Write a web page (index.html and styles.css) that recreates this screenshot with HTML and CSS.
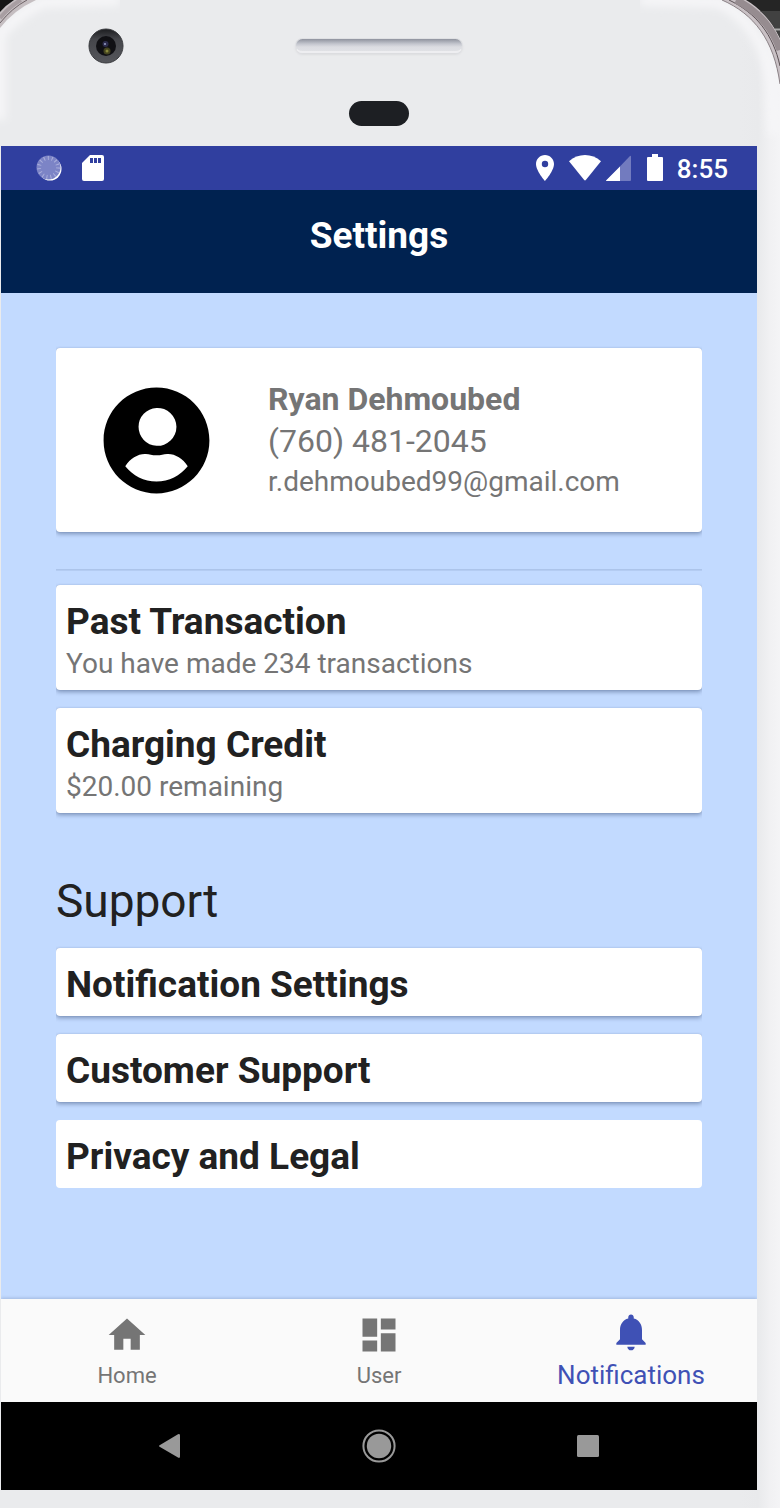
FILE: index.html
```html
<!DOCTYPE html>
<html lang="en">
<head>
<meta charset="utf-8">
<meta name="viewport" content="width=device-width, initial-scale=1">
<title>Settings</title>
<link rel="stylesheet" href="styles.css">
</head>
<body>
<div class="device">
  <svg class="corner corner-left" width="120" height="140" viewBox="0 0 120 140" aria-hidden="true">
    <defs><filter id="soft" x="-50%" y="-50%" width="200%" height="200%"><feGaussianBlur stdDeviation="4"/></filter></defs>
    <path d="M0 120V34Q20 12 44 2L120 0" fill="none" stroke="#f6f6f8" stroke-width="11" filter="url(#soft)"/>
    <path d="M0 28Q14 10 36 0H0Z" fill="#c5bec1"/>
    <path d="M0 23Q12 8 27 0" fill="none" stroke="#6d6266" stroke-width="1"/>
    <path d="M0 18Q10 6 21 0" fill="none" stroke="#a89ea2" stroke-width="4"/>
    <path d="M0 12Q6 5 14 0H0Z" fill="#161616"/>
  </svg>
  <svg class="corner corner-right" width="140" height="140" viewBox="0 0 140 140" aria-hidden="true">
    <path d="M0 0L78 2C108 16 126 44 132 84L134 134" fill="none" stroke="#f6f6f8" stroke-width="11" filter="url(#soft)"/>
    <g transform="translate(80 0)">
      <path d="M2 0C34 14 54 40 60 84V0Z" fill="#c9c1c5"/>
      <path d="M2 0C34 14 54 40 60 84" fill="none" stroke="#8a8185" stroke-width="1"/>
      <path d="M9 0C36 13 53 34 60 66" fill="none" stroke="#594f53" stroke-width="1"/>
      <path d="M16 0C38 11 53 29 60 50" fill="none" stroke="#968c90" stroke-width="7"/>
      <path d="M26 0C42 10 52 21 60 38V0Z" fill="#252525"/>
      <path d="M40 11H60V38C54 26 48 18 40 11Z" fill="#414141"/>
      <path d="M55 29.500H60" stroke="#aaa" stroke-width="2"/>
    </g>
  </svg>

  <div class="bezel">
    <svg class="camera" width="36" height="36" viewBox="0 0 36 36" aria-hidden="true">
      <defs>
        <linearGradient id="ring" x1="0" y1="0" x2="0" y2="1"><stop offset="0" stop-color="#1c1d20"/><stop offset=".3" stop-color="#45464b"/><stop offset="1" stop-color="#55565b"/></linearGradient>
      </defs>
      <circle cx="18" cy="18" r="17" fill="url(#ring)" stroke="#3a3b3f"/>
      <circle cx="18" cy="18" r="10" fill="#101014"/>
      <circle cx="17.500" cy="16" r="3" fill="#2c2c4c"/>
      <circle cx="17" cy="16" r="1" fill="#9aa0c8"/>
      <circle cx="19" cy="23" r="3.500" fill="#44441f"/>
      <circle cx="19" cy="23" r="1.500" fill="#88883c"/>
    </svg>
    <div class="speaker"></div>
    <div class="sensor"></div>
  </div>

  <div class="screen">
    <div class="statusbar">
      <div class="status-group">
        <svg width="27" height="28" viewBox="0 0 27 28" aria-hidden="true">
          <circle cx="14" cy="15" r="11.500" fill="#fff"/>
          <circle cx="12.500" cy="13.500" r="12" fill="#7c84c6"/>
          <circle cx="12.500" cy="13.500" r="9.500" fill="none" stroke="#a9aedb" stroke-width="4" stroke-dasharray="1 2.980"/>
        </svg>
        <svg width="22" height="26" viewBox="0 0 22 26" aria-hidden="true">
          <path d="M8 0H20Q22 0 22 2V24Q22 26 20 26H2Q0 26 0 24V8Z" fill="#fff"/>
          <path d="M8 3h3v5H8zM12 3h3v5h-3zM16 3h3v5h-3z" fill="#303f9f"/>
        </svg>
      </div>
      <div class="status-group status-right">
        <svg width="18" height="26" viewBox="0 0 18 26" aria-hidden="true">
          <path fill="#fff" fill-rule="evenodd" d="M9 0C4 0 0 4 0 9c0 7 9 17 9 17s9-10 9-17c0-5-4-9-9-9zm0 12.200a3.200 3.200 0 1 1 0-6.400 3.200 3.200 0 0 1 0 6.400z"/>
        </svg>
        <svg class="wifi" width="32" height="26" viewBox="0 0 32 26" aria-hidden="true">
          <path fill="#fff" d="M0 6.300C9-2 23-2 32 6.300L17 24.800Q16 26 15 24.800Z"/>
        </svg>
        <svg class="signal" width="25" height="26" viewBox="0 0 25 26" aria-hidden="true">
          <path fill="#727bbf" d="M0 26L23.500 1.500Q25 0 25 2V25Q25 26 24 26Z"/>
          <path fill="#fff" d="M14 11.400V26H1Q-.5 26 .5 25Z"/>
        </svg>
        <svg class="battery" width="16" height="28" viewBox="0 0 16 28" aria-hidden="true">
          <path fill="#fff" d="M5 0H11V3H15Q16 3 16 4V26Q16 27 15 27H1Q0 27 0 26V4Q0 3 1 3H5Z"/>
        </svg>
        <span class="clock">8:55</span>
      </div>
    </div>

    <header class="appbar"><h1 class="appbar-title">Settings</h1></header>

    <main class="content">
      <section class="card profile">
        <svg class="avatar" width="127" height="127" viewBox="0 0 24 24" aria-hidden="true">
          <path d="M12 2C6.480 2 2 6.480 2 12s4.480 10 10 10 10-4.480 10-10S17.520 2 12 2zm0 3.850a3.580 3.580 0 1 1 0 7.150 3.580 3.580 0 0 1 0-7.150zM12 19.750c-2.350 0-4.500-1.150-5.900-2.900.95-1.500 2.500-2.400 3.900-2.300.7.050 1.100.25 2 .25s1.300-.2 2-.25c1.400-.1 2.950.8 3.900 2.300-1.400 1.750-3.550 2.900-5.900 2.900z"/>
        </svg>
        <div class="profile-text">
          <p class="profile-name">Ryan Dehmoubed</p>
          <p class="profile-phone">(760) 481-2045</p>
          <p class="profile-email">r.dehmoubed99@gmail.com</p>
        </div>
      </section>

      <hr class="divider">

      <div class="card-list">
        <button class="card row row-detail" type="button">
          <span class="row-title">Past Transaction</span>
          <span class="row-note">You have made 234 transactions</span>
        </button>
        <button class="card row row-detail" type="button">
          <span class="row-title">Charging Credit</span>
          <span class="row-note">$20.00 remaining</span>
        </button>
      </div>

      <h2 class="section-title">Support</h2>

      <div class="card-list">
        <button class="card row" type="button"><span class="row-title">Notification Settings</span></button>
        <button class="card row" type="button"><span class="row-title">Customer Support</span></button>
        <button class="card row flat" type="button"><span class="row-title">Privacy and Legal</span></button>
      </div>
    </main>

    <nav class="tabs">
      <a class="tab" href="#home">
        <svg width="44" height="44" viewBox="0 0 24 24" aria-hidden="true"><path d="M10 20v-6h4v6h5v-8h3L12 3 2 12h3v8z"/></svg>
        <span>Home</span>
      </a>
      <a class="tab" href="#user">
        <svg width="44" height="44" viewBox="0 0 24 24" aria-hidden="true"><path d="M3 13h8V3H3v10zm0 8h8v-6H3v6zm10 0h8V11h-8v10zm0-18v6h8V3h-8z"/></svg>
        <span>User</span>
      </a>
      <a class="tab tab-active" href="#notifications" aria-current="page">
        <svg width="44" height="44" viewBox="0 0 24 24" aria-hidden="true"><path d="M12 22c1.100 0 2-.9 2-2h-4c0 1.100.89 2 2 2zm6-6v-5c0-3.070-1.640-5.640-4.500-6.320V4c0-.83-.67-1.500-1.500-1.500s-1.500.67-1.500 1.500v.68C7.630 5.360 6 7.920 6 11v5l-2 2v1h16v-1l-2-2z"/></svg>
        <span>Notifications</span>
      </a>
    </nav>

    <div class="sysbar">
      <button class="sysbtn" type="button" aria-label="Back">
        <svg width="34" height="34" viewBox="0 0 34 34"><path d="M7 16L25 5.200Q27 4.500 27 6.500V27.500Q27 29.500 25 28.600L7 18Q5 17 7 16Z" fill="#999"/></svg>
      </button>
      <button class="sysbtn" type="button" aria-label="Home">
        <svg width="34" height="34" viewBox="0 0 34 34"><circle cx="17" cy="17" r="15.600" fill="none" stroke="#999" stroke-width="2"/><circle cx="17" cy="17" r="12.200" fill="#999"/></svg>
      </button>
      <button class="sysbtn" type="button" aria-label="Recent apps">
        <svg width="34" height="34" viewBox="0 0 34 34"><rect x="6" y="6" width="22" height="22" rx="1.500" fill="#999"/></svg>
      </button>
    </div>
  </div>
</div>
</body>
</html>
```
FILE: styles.css
```css
* { box-sizing: border-box; }

body {
  margin: 0;
  font-family: Roboto, "Liberation Sans", sans-serif;
  background: #eaebed;
}

h1, h2, p { margin: 0; }

button {
  border: 0;
  padding: 0;
  background: none;
  font: inherit;
  cursor: pointer;
}

svg { display: block; flex: none; }

.device {
  position: relative;
  min-height: 100vh;
  padding: 0 23px 18px 1px;
  overflow: hidden;
  background: linear-gradient(to left, #f4f4f6 0, #f1f1f3 10px, #e9eaec 22px, #eaebed 40px);
}

.corner { position: absolute; top: 0; }
.corner-left { left: 0; }
.corner-right { right: 0; }

/* Top bezel */
.bezel {
  position: relative;
  display: grid;
  grid-template-columns: 1fr auto 1fr;
  grid-template-rows: 38px auto;
  align-items: start;
  height: 146px;
  padding-top: 28px;
}
.camera { margin-left: 87px; grid-row: 1; }
.speaker {
  grid-area: 1 / 2;
  width: 168px;
  height: 15px;
  margin-top: 10px;
  border: 1px solid #dfe0e3;
  border-bottom: 2px solid #eeeef1;
  border-radius: 8px;
  background: linear-gradient(#8f939e, #c5c7cf 5px, #dcdde2 8px, #e0e1e5);
  box-shadow: 0 2px 2px #dcdde0;
}
.sensor {
  grid-area: 2 / 2;
  justify-self: center;
  width: 60px;
  height: 25px;
  margin-top: 35px;
  border-radius: 13px;
  background: #1d1f23;
}

.screen { position: relative; overflow: hidden; }

/* Status bar */
.statusbar {
  display: flex;
  align-items: center;
  justify-content: space-between;
  height: 44px;
  padding: 0 29px 0 35px;
  background: #303f9f;
  color: #fff;
}
.status-group { display: flex; align-items: center; gap: 19px; }
.status-right { gap: 15px; }
.wifi { margin-right: -10px; }
.battery { margin-right: -1px; margin-left: 1px; }
.clock { font-size: 26px; font-weight: 500; line-height: 30px; padding-top: 2px; }

/* App bar */
.appbar {
  padding: 24px 16px 35px;
  background: #002250;
  color: #fff;
  text-align: center;
}
.appbar-title { font-size: 37px; line-height: 44px; }

/* Content */
.content {
  min-height: 1006px;
  padding: 55px;
  background: #c2daff;
}
.card {
  border-radius: 4px;
  background: #fff;
  box-shadow: 0 2px 4px rgba(30, 50, 90, .42), 0 0 1px rgba(30, 50, 90, .25);
  clip-path: inset(-2px 0 -8px 0);
}
.flat { box-shadow: none; }

.profile {
  display: flex;
  align-items: flex-start;
  gap: 48px;
  padding: 29px 37px 28px;
}
.profile-text { padding-top: 1px; color: #757575; }
.profile-name, .profile-phone { font-size: 32px; line-height: 42px; }
.profile-name { font-weight: 700; }
.profile-email { font-size: 28px; line-height: 40px; }

.divider {
  height: 2px;
  margin: 37px 0 14px;
  border: 0;
  background: linear-gradient(#a8c0e6, #b8d0f6);
}

.card-list { display: flex; flex-direction: column; gap: 18px; }
.row { padding: 11px 10px 6px; text-align: left; }
.row-detail { padding-bottom: 10px; }
.row-title, .row-note { display: block; }
.row-title {
  color: #212121;
  font-size: 37px;
  font-weight: 700;
  line-height: 51px;
}
.row-note { color: #757575; font-size: 28px; line-height: 33px; }

.section-title {
  margin: 60px 0 19px;
  color: #212121;
  font-size: 46px;
  font-weight: 400;
  line-height: 56px;
}

/* Bottom tabs */
.tabs {
  display: grid;
  grid-template-columns: repeat(3, 1fr);
  height: 103px;
  background: #fafafa;
  box-shadow: 0 -1px 3px rgba(30, 50, 90, .2);
}
.tab {
  display: flex;
  flex-direction: column;
  align-items: center;
  padding-top: 14px;
  color: #757575;
  font-size: 22px;
  line-height: 38px;
  text-decoration: none;
}
.tab svg { fill: currentColor; }
.tab-active {
  padding-top: 11px;
  color: #3f51b5;
  font-size: 26px;
  line-height: 42px;
}

/* System navigation */
.sysbar {
  display: grid;
  grid-template-columns: repeat(3, 1fr);
  height: 88px;
  padding: 0 64px;
  background: #000;
}
.sysbtn { display: grid; place-items: center; }
```
